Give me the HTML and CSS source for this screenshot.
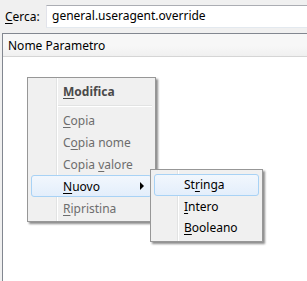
FILE: index.html
```html
<!DOCTYPE html>
<html>
<head>
<meta charset="utf-8">
<link rel="stylesheet" href="styles.css">
</head>
<body>
<div class="searchbar">
  <label class="search-label"><u>C</u>erca:</label>
  <div class="search-box">general.useragent.override</div>
</div>
<div class="panel">
  <div class="panel-header"><span class="col-name">Nome Parametro</span></div>
  <div class="panel-body"></div>
</div>

<div class="menu main-menu">
  <div class="menu-item bold disabled"><span class="label"><u>M</u>odifica</span></div>
  <div class="menu-sep"></div>
  <div class="menu-item disabled"><span class="label"><u>C</u>opia</span></div>
  <div class="menu-item disabled"><span class="label">C<u>o</u>pia nome</span></div>
  <div class="menu-item disabled"><span class="label">Copia <u>v</u>alore</span></div>
  <div class="menu-item hover"><span class="label"><u>N</u>uovo</span><span class="arrow"></span></div>
  <div class="menu-item disabled"><span class="label"><u>R</u>ipristina</span></div>
</div>

<div class="menu sub-menu">
  <div class="menu-item hover"><span class="label">St<u>r</u>inga</span></div>
  <div class="menu-item"><span class="label"><u>I</u>ntero</span></div>
  <div class="menu-item"><span class="label"><u>B</u>ooleano</span></div>
</div>
</body>
</html>
```
FILE: styles.css
```css
html, body {
  margin: 0;
  padding: 0;
}
body {
  width: 307px;
  height: 281px;
  overflow: hidden;
  background: #f0f0f0;
  font-family: "Noto Sans", "Open Sans", sans-serif;
  font-size: 12px;
  color: #000;
  position: relative;
}
.searchbar {
  display: flex;
  align-items: center;
  height: 33px;
  padding-left: 5px;
  box-sizing: border-box;
}
.search-label {
  width: 41px;
}
.search-box {
  flex: 1;
  height: 23px;
  margin-top: -1px;
  box-sizing: border-box;
  border: 1px solid #abadb3;
  border-right: none;
  border-bottom-color: #e3e9ef;
  border-left-color: #e2e3ea;
  background: #fff;
  padding-left: 5px;
  line-height: 20px;
}
.panel {
  margin-left: 2px;
  border-top: 1px solid #828790;
  border-left: 1px solid #828790;
  background: #fff;
  height: 248px;
}
.panel-header {
  height: 23px;
  box-sizing: border-box;
  border-bottom: 1px solid #d5d5d5;
  background: linear-gradient(#f7f7f7 0, #f7f7f7 55%, #f0f0f0 100%);
  display: flex;
  align-items: center;
  padding-left: 5px;
}
.menu {
  position: absolute;
  background: #f0f0f0;
  border: 1px solid #979797;
  box-shadow: 2px 2px 2px rgba(0,0,0,0.45);
  padding: 2px 3px;
  box-sizing: border-box;
  background-image: linear-gradient(to right, transparent 28px, #e2e3e3 28px, #e2e3e3 29px, #fff 29px, #fff 30px, transparent 30px);
}
.main-menu {
  left: 27px;
  top: 77px;
  width: 129px;
}
.sub-menu {
  left: 150px;
  top: 169px;
  width: 113px;
  padding-top: 4px;
  background-image: linear-gradient(to right, transparent 26px, #e2e3e3 26px, #e2e3e3 27px, #fff 27px, #fff 28px, transparent 28px);
}
.menu-item {
  height: 22px;
  display: flex;
  align-items: center;
  padding-left: 31px;
  position: relative;
  box-sizing: border-box;
  border: 1px solid transparent;
  border-radius: 3px;
}
.sub-menu .menu-item {
  padding-left: 29px;
  height: 21.5px;
}
.menu-item.bold .label {
  font-weight: bold;
}
.menu-item.disabled {
  color: #6d6d6d;
}
.menu-item.bold.disabled {
  color: #4a4a4a;
}
.menu-item.hover {
  border-color: #a8d2f5;
  background: linear-gradient(#f2f7fd, #e3eefb);
}
.menu-sep {
  height: 7px;
  margin-left: 27px;
  background: linear-gradient(transparent 3px, #e2e3e3 3px, #e2e3e3 4px, #fff 4px, #fff 5px, transparent 5px);
}
.arrow {
  position: absolute;
  right: 7px;
  top: 6px;
  width: 0;
  height: 0;
  border-top: 4px solid transparent;
  border-bottom: 4px solid transparent;
  border-left: 4px solid #000;
}
u {
  text-decoration: underline;
  text-underline-offset: 2px;
}
```
